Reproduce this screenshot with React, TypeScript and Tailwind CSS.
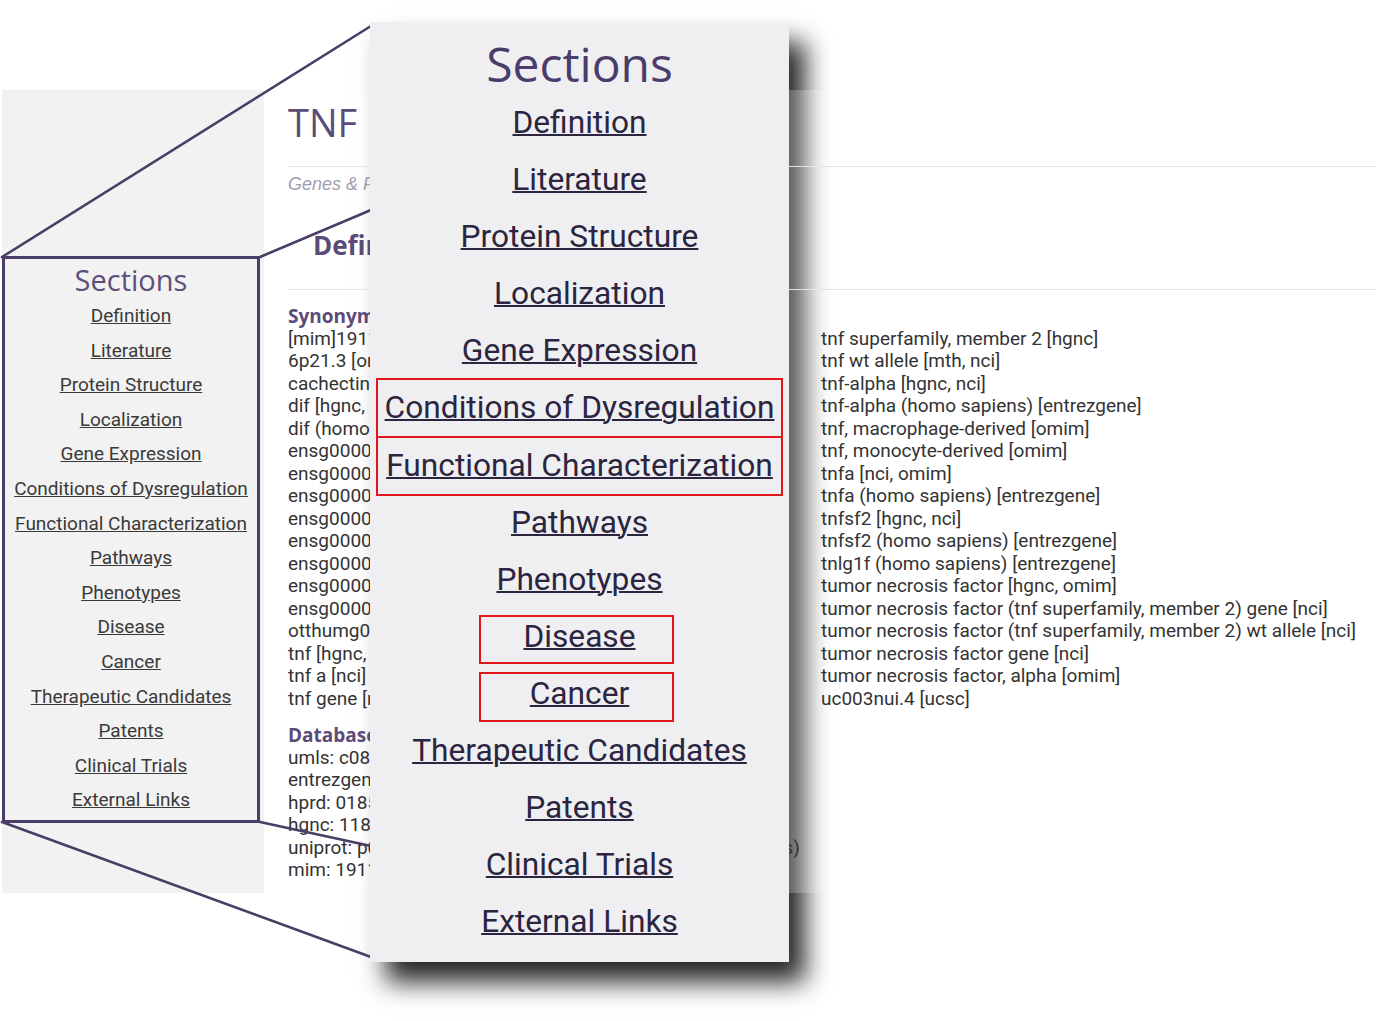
const sections = [
  "Definition",
  "Literature",
  "Protein Structure",
  "Localization",
  "Gene Expression",
  "Conditions of Dysregulation",
  "Functional Characterization",
  "Pathways",
  "Phenotypes",
  "Disease",
  "Cancer",
  "Therapeutic Candidates",
  "Patents",
  "Clinical Trials",
  "External Links",
];

const synonymsLeft = [
  "[mim]191160 [omim]",
  "6p21.3 [omim]",
  "cachectin [hgnc, nci, omim]",
  "dif [hgnc, nci]",
  "dif (homo sapiens) [entrezgene]",
  "ensg00000204490 [ensembl]",
  "ensg00000206439 [ensembl]",
  "ensg00000223952 [ensembl]",
  "ensg00000228321 [ensembl]",
  "ensg00000228849 [ensembl]",
  "ensg00000228978 [ensembl]",
  "ensg00000230108 [ensembl]",
  "ensg00000232810 [ensembl]",
  "otthumg00000031193 [vega]",
  "tnf [hgnc, nci]",
  "tnf a [nci]",
  "tnf gene [nci]",
];

const synonymsRight = [
  "tnf superfamily, member 2 [hgnc]",
  "tnf wt allele [mth, nci]",
  "tnf-alpha [hgnc, nci]",
  "tnf-alpha (homo sapiens) [entrezgene]",
  "tnf, macrophage-derived [omim]",
  "tnf, monocyte-derived [omim]",
  "tnfa [nci, omim]",
  "tnfa (homo sapiens) [entrezgene]",
  "tnfsf2 [hgnc, nci]",
  "tnfsf2 (homo sapiens) [entrezgene]",
  "tnlg1f (homo sapiens) [entrezgene]",
  "tumor necrosis factor [hgnc, omim]",
  "tumor necrosis factor (tnf superfamily, member 2) gene [nci]",
  "tumor necrosis factor (tnf superfamily, member 2) wt allele [nci]",
  "tumor necrosis factor gene [nci]",
  "tumor necrosis factor, alpha [omim]",
  "uc003nui.4 [ucsc]",
];

const databases = [
  "umls: c0812246",
  "entrezgene: 7124",
  "hprd: 01855",
  "hgnc: 11892",
  "uniprot: p01375 (tumor necrosis factor alpha, homo sapiens)",
  "mim: 191160",
];

// red highlight frames drawn over some rows of the zoomed list
const frames: Record<string, string> = {
  "Conditions of Dysregulation": "left-[6px] right-[6px] top-[-1.5px] h-[60px] border-2",
  "Functional Characterization": "left-[6px] right-[6px] top-[1.4px] h-[58px] border-2 border-t-0",
  Disease: "left-[109px] w-[195px] top-[7px] h-[49px] border-2",
  Cancer: "left-[109px] w-[195px] top-[7px] h-[50px] border-2",
};

function SmallSections() {
  return (
    <div className="w-[258px] border-[3px] border-[#4a3d66] pt-[6px] pb-[2px] flex flex-col items-center">
      <div className="font-['Open_Sans',sans-serif] text-[29px] leading-[30px] text-[#5d4f7a]">Sections</div>
      <div className="mt-[4px] w-full flex flex-col">
        {sections.map((s) => (
          <div
            key={s}
            className="h-[34.6px] leading-[34.6px] text-center font-['Roboto',sans-serif] text-[19px] text-[#3a3a3a] underline"
          >
            {s}
          </div>
        ))}
      </div>
    </div>
  );
}

function BigSections() {
  return (
    <div className="absolute left-[370px] top-[22px] w-[419px] h-[940px] bg-[#efeff2] z-30 pt-[18px] flex flex-col">
      <div className="font-['Open_Sans',sans-serif] text-[48px] leading-[48px] text-center text-[#4a3c6b]">Sections</div>
      <div className="mt-[6px] flex flex-col">
        {sections.map((s) => (
          <div
            key={s}
            className="relative h-[57.1px] leading-[57.1px] text-center font-['Roboto',sans-serif] text-[31.7px] text-[#2b2540] underline decoration-2"
          >
            {s}
            {frames[s] && <span className={`absolute border-[#e3161b] ${frames[s]}`} />}
          </div>
        ))}
      </div>
    </div>
  );
}

function Connectors() {
  return (
    <svg className="absolute left-0 top-0 z-20 pointer-events-none" width="1376" height="1021" viewBox="0 0 1376 1021">
      <g stroke="#4a3d66" strokeWidth="2.6" fill="none" strokeLinecap="round">
        <line x1="2" y1="257" x2="371" y2="26" />
        <line x1="260" y1="257" x2="371" y2="210" />
        <line x1="260" y1="822" x2="371" y2="846" />
        <line x1="2" y1="822" x2="371" y2="957" />
      </g>
    </svg>
  );
}

export default function App() {
  return (
    <div className="relative w-[1376px] h-[1021px] bg-white overflow-hidden">
      {/* panel shadow sits under the page so it reads lighter there */}
      <div className="absolute left-[370px] top-[22px] w-[419px] h-[940px] bg-[#333] shadow-[16px_20px_24px_rgba(0,0,0,0.85)]" />

      <div className="h-[90px]" />
      <div className="relative z-10 flex h-[803px] ml-[2px]">
        <div className="w-[262px] bg-[#f2f2f2] pt-[166px]">
          <SmallSections />
        </div>
        <div className="flex-1 bg-white/[0.22] pl-[24px] pt-[9px]">
          <div className="font-['Open_Sans',sans-serif] text-[38px] leading-[46px] text-[#5b4b78]">TNF</div>
          <div className="mt-[21px] border-t border-[#e3e3e3]" />
          <div className="mt-[7px] font-['Liberation_Sans',sans-serif] italic text-[18px] leading-[21px] text-[#a39db0]">
            Genes &amp; Proteins
          </div>
          <div className="mt-[35px] pl-[25px] font-['Open_Sans',sans-serif] font-bold text-[26px] leading-[31px] text-[#5b4b78]">
            Definition
          </div>
          <div className="mt-[28px] border-t border-[#e3e3e3]" />
          <div className="mt-[15px] grid grid-cols-[533px_1fr] font-['Roboto',sans-serif] text-[19px] leading-[22.5px] text-[#333]">
            <div className="flex flex-col">
              <div className="font-['Open_Sans',sans-serif] font-bold text-[19px] text-[#5b4b78]">Synonyms</div>
              {synonymsLeft.map((s) => (
                <div key={s} className="whitespace-nowrap">{s}</div>
              ))}
              <div className="mt-[14px] font-['Open_Sans',sans-serif] font-bold text-[19px] text-[#5b4b78]">Databases</div>
              {databases.map((s) => (
                <div key={s} className="whitespace-nowrap">{s}</div>
              ))}
            </div>
            <div className="flex flex-col pt-[22.5px]">
              {synonymsRight.map((s) => (
                <div key={s} className="whitespace-nowrap">{s}</div>
              ))}
            </div>
          </div>
        </div>
      </div>

      <Connectors />
      <BigSections />
    </div>
  );
}
